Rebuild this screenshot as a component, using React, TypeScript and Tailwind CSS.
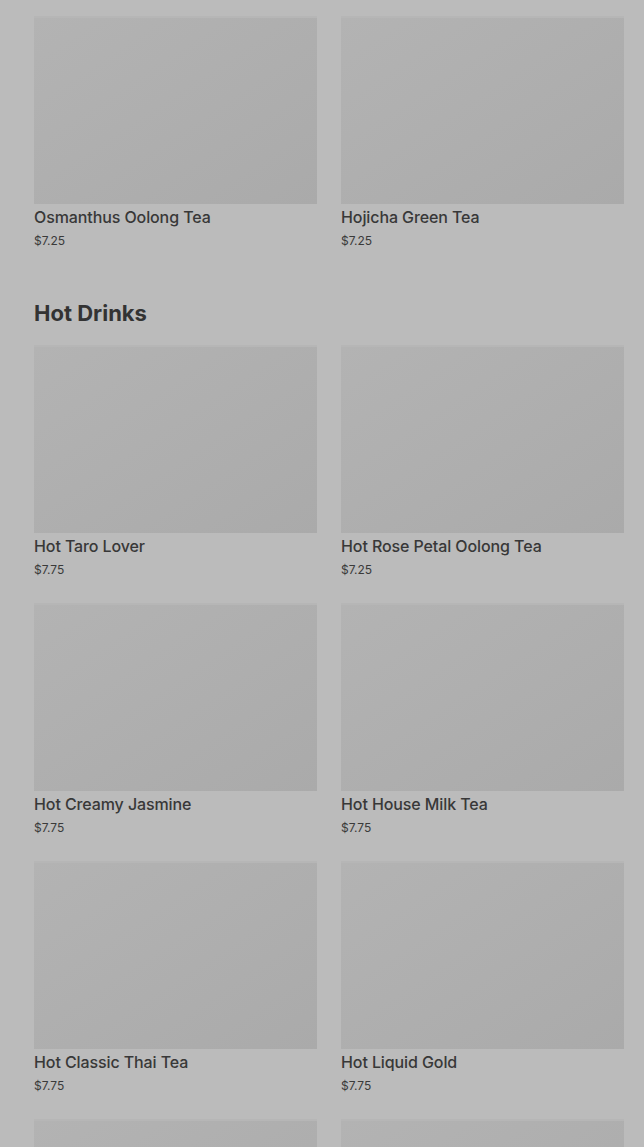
const topItems = [
  { name: 'Osmanthus Oolong Tea', price: '$7.25' },
  { name: 'Hojicha Green Tea', price: '$7.25' },
];

const hotDrinks = [
  { name: 'Hot Taro Lover', price: '$7.75' },
  { name: 'Hot Rose Petal Oolong Tea', price: '$7.25' },
  { name: 'Hot Creamy Jasmine', price: '$7.75' },
  { name: 'Hot House Milk Tea', price: '$7.75' },
  { name: 'Hot Classic Thai Tea', price: '$7.75' },
  { name: 'Hot Liquid Gold', price: '$7.75' },
  { name: '', price: '' },
  { name: '', price: '' },
];

const Card = ({ name, price }: { name: string; price: string }) => (
  <div className="flex flex-col">
    <div className="h-[188px] bg-gradient-to-br from-[#b3b3b3] to-[#aaaaaa] border-t-2 border-[#b6b6b6]" />
    <div className="h-[24px] pt-[2px] text-[16px] leading-[22px] font-medium tracking-[-0.1px] text-[#383838]">{name}</div>
    <div className="h-[22px] pt-[4px] text-[12px] leading-[18px] text-[#3a3a3a]">{price}</div>
  </div>
);

export default function App() {
  return (
    <div
      className="min-h-screen h-[1147px] overflow-hidden bg-[#bbbbbb] pl-[34px] pr-[20px] pt-[16px]"
      style={{ fontFamily: 'Inter, "Liberation Sans", sans-serif' }}
    >
      <div className="grid grid-cols-2 gap-x-[24px] gap-y-[24px]">
        {topItems.map((item, i) => (
          <Card key={i} {...item} />
        ))}
      </div>

      <h2 className="mt-[47px] mb-[16px] text-[22px] leading-[32px] font-bold text-[#333333]">
        Hot Drinks
      </h2>

      <div className="grid grid-cols-2 gap-x-[24px] gap-y-[24px]">
        {hotDrinks.map((item, i) => (
          <Card key={i} {...item} />
        ))}
      </div>
    </div>
  );
}
